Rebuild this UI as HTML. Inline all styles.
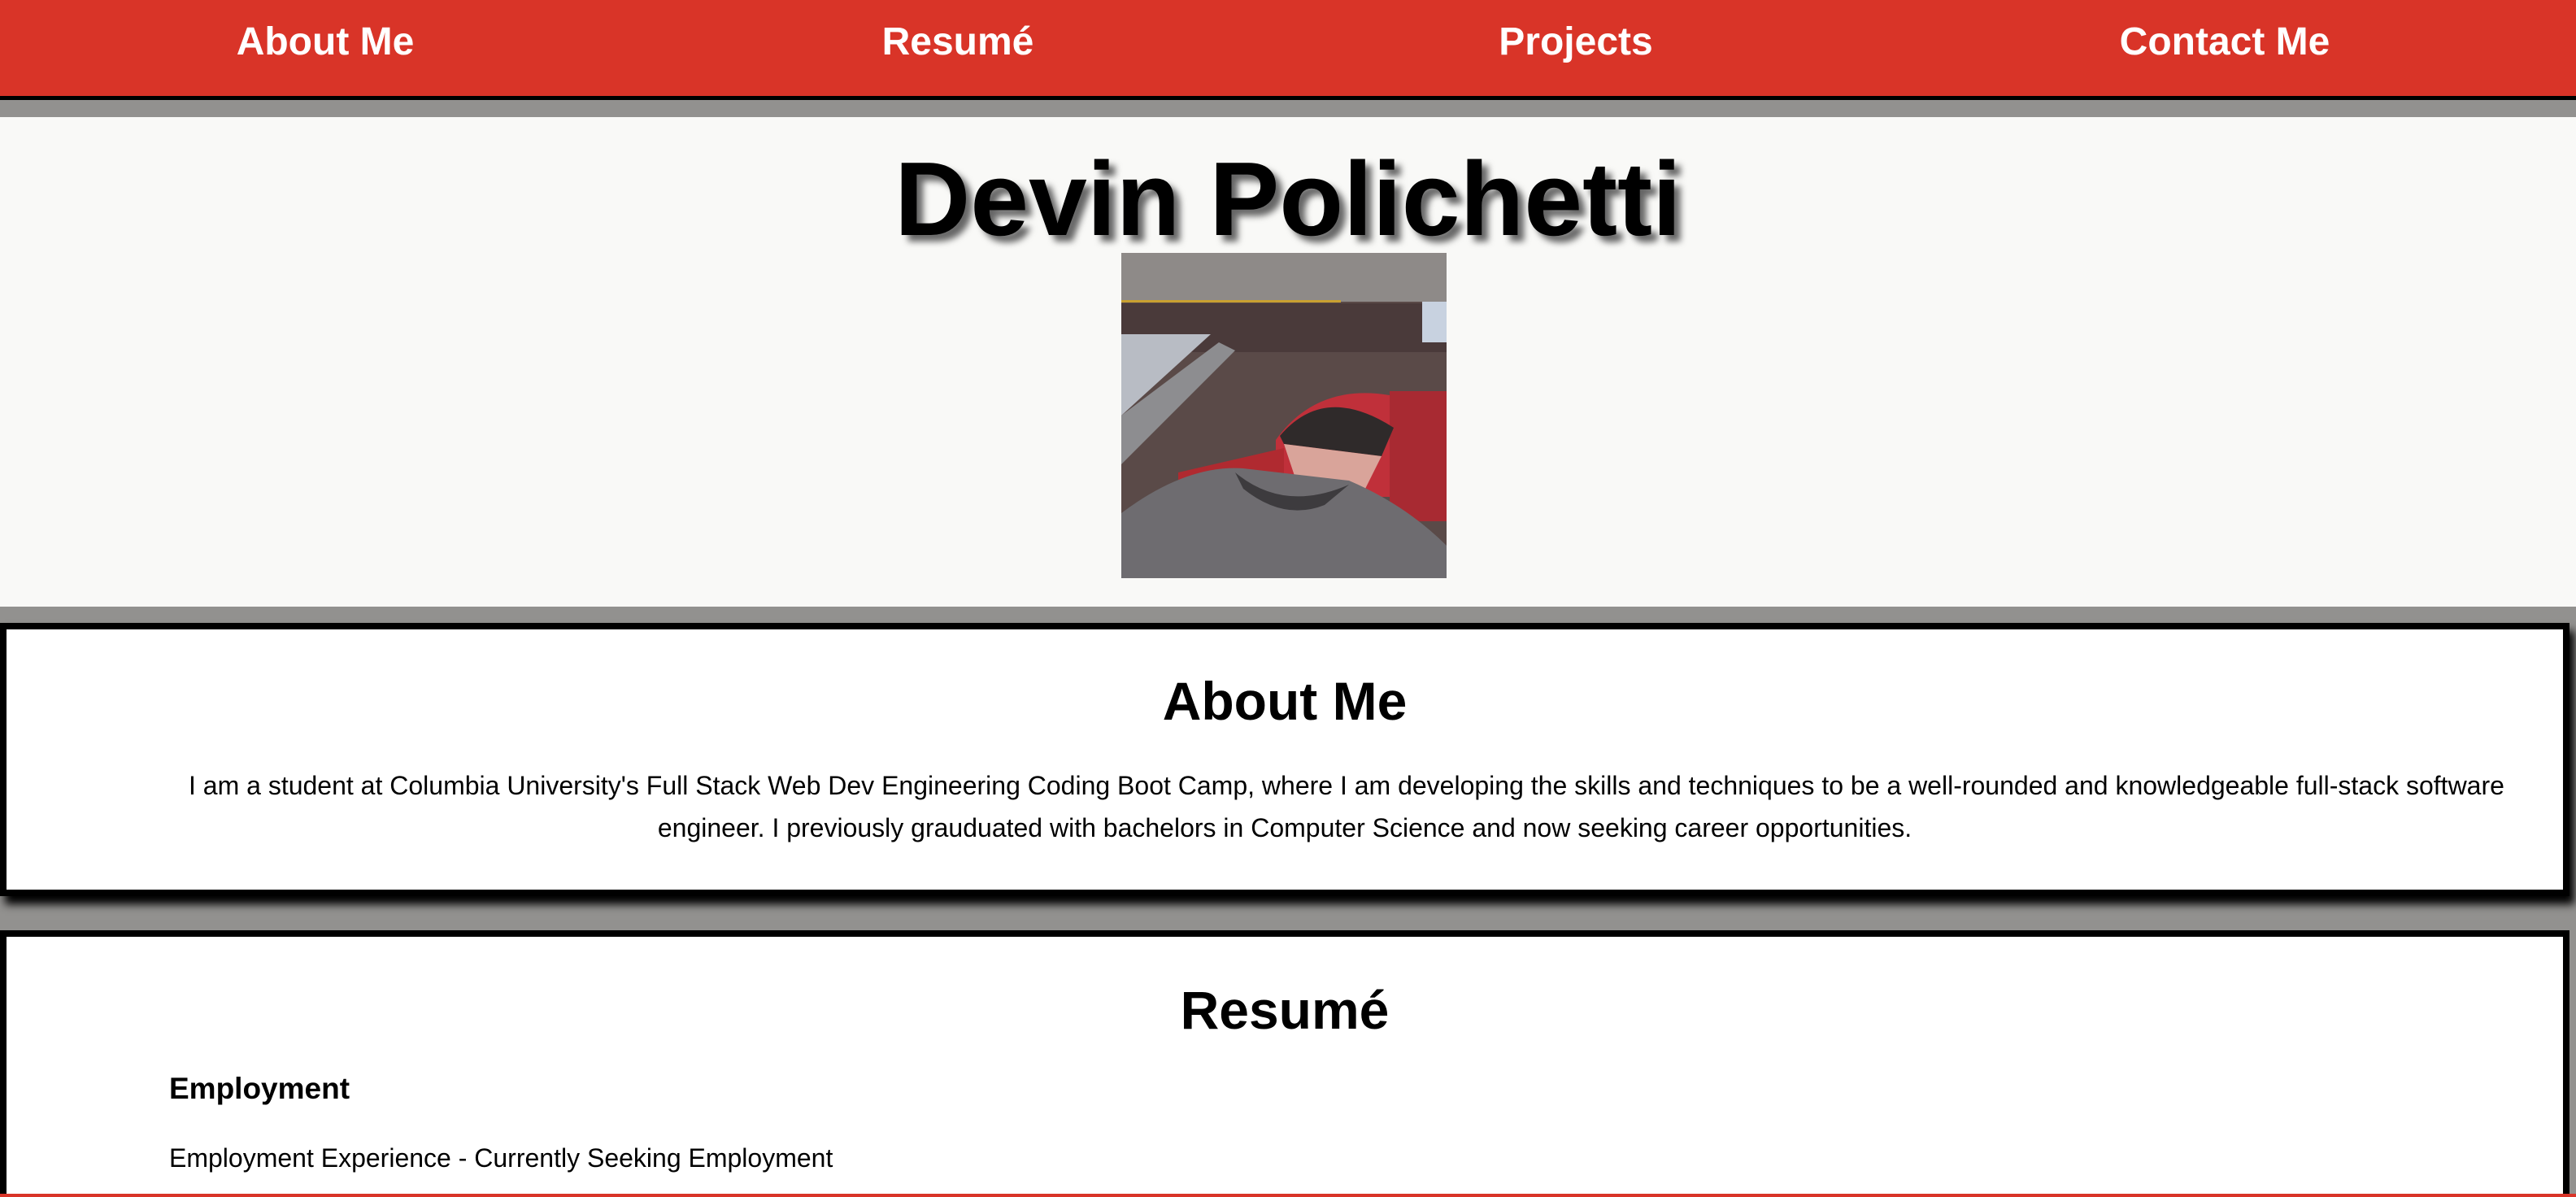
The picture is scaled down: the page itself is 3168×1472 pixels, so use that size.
<!DOCTYPE html>
<html><head><meta charset="utf-8">
<style>
*{margin:0;padding:0;box-sizing:border-box}
html,body{width:3168px;height:1472px;overflow:hidden}
body{background:#92918f;font-family:"Liberation Sans",Arial,sans-serif}
#w{position:relative;width:3168px;height:1472px;overflow:hidden}
.nav{position:absolute;left:0;top:0;width:3168px;height:123px;background:#d93428;border-bottom:5px solid #000}
.nav span{position:absolute;top:24px;color:#fff;font-weight:bold;font-size:48px;transform:translateX(-50%);white-space:nowrap}
.hero{position:absolute;left:0;top:144px;width:3168px;height:602px;background:#f9f9f7}
h1{position:absolute;left:0;width:3168px;top:168px;text-align:center;font-size:129px;font-weight:bold;text-shadow:8px 8px 8px #666;line-height:1.2}
.photo{position:absolute;left:1379px;top:311px;width:400px;height:400px}
.box{position:absolute;left:0;width:3160px;background:#fff;border:8px solid #000}
.b1{top:766px;height:336px;box-shadow:6px 10px 10px #000}
.b2{top:1144px;height:400px}
h2{position:absolute;left:0;width:100%;text-align:center;font-size:66px;font-weight:bold}
.p{position:absolute;font-size:32px;white-space:nowrap}
.red{position:absolute;left:0;top:1468px;width:3168px;height:4px;background:#d93428}
</style></head><body><div id="w">
<div class="nav">
<span style="left:400px">About Me</span>
<span style="left:1178px">Resumé</span>
<span style="left:1938px">Projects</span>
<span style="left:2736px">Contact Me</span>
</div>
<div class="hero"></div>
<h1>Devin Polichetti</h1>
<svg class="photo" viewBox="0 0 400 400">
<rect width="400" height="400" fill="#5a4a48"/>
<rect width="400" height="60" fill="#8e8a88"/>
<rect x="0" y="58" width="270" height="3" fill="#c9a030"/>
<rect x="0" y="62" width="400" height="60" fill="#4a3a3a"/>
<polygon points="0,100 110,100 0,200" fill="#b8bcc4"/>
<polygon points="0,200 120,110 140,120 0,260" fill="#8d8d90"/>
<rect x="370" y="60" width="30" height="50" fill="#c8d2e0"/>
<path d="M190 230 Q240 160 330 175 L330 300 L190 300Z" fill="#c0303a"/>
<path d="M330 170 L400 170 L400 330 L330 330Z" fill="#a82a32"/>
<path d="M70 270 L200 240 L200 300 L70 300Z" fill="#b02a30"/>
<path d="M195 225 Q250 160 335 215 L320 250 L200 235Z" fill="#2f2a2a"/>
<path d="M200 235 L320 250 L300 290 Q250 310 215 280Z" fill="#d9a49a"/>
<path d="M0 320 Q80 260 150 265 L280 280 Q350 310 400 360 L400 400 L0 400Z" fill="#6e6c70"/>
<path d="M140 270 Q200 320 280 285 L250 310 Q200 330 150 290Z" fill="#3d3b3e"/>
</svg>
<div class="box b1">
<h2 style="top:50px">About Me</h2>
<div class="p" style="left:224px;top:174px">I am a student at Columbia University's Full Stack Web Dev Engineering Coding Boot Camp, where I am developing the skills and techniques to be a well-rounded and knowledgeable full-stack software</div>
<div class="p" style="left:0;width:100%;text-align:center;top:226px">engineer. I previously grauduated with bachelors in Computer Science and now seeking career opportunities.</div>
</div>
<div class="box b2">
<h2 style="top:52px">Resumé</h2>
<div class="p" style="left:200px;top:166px;font-weight:bold;font-size:37px">Employment</div>
<div class="p" style="left:200px;top:254px">Employment Experience - Currently Seeking Employment</div>
</div>
<div class="red"></div>
</div></body></html>
